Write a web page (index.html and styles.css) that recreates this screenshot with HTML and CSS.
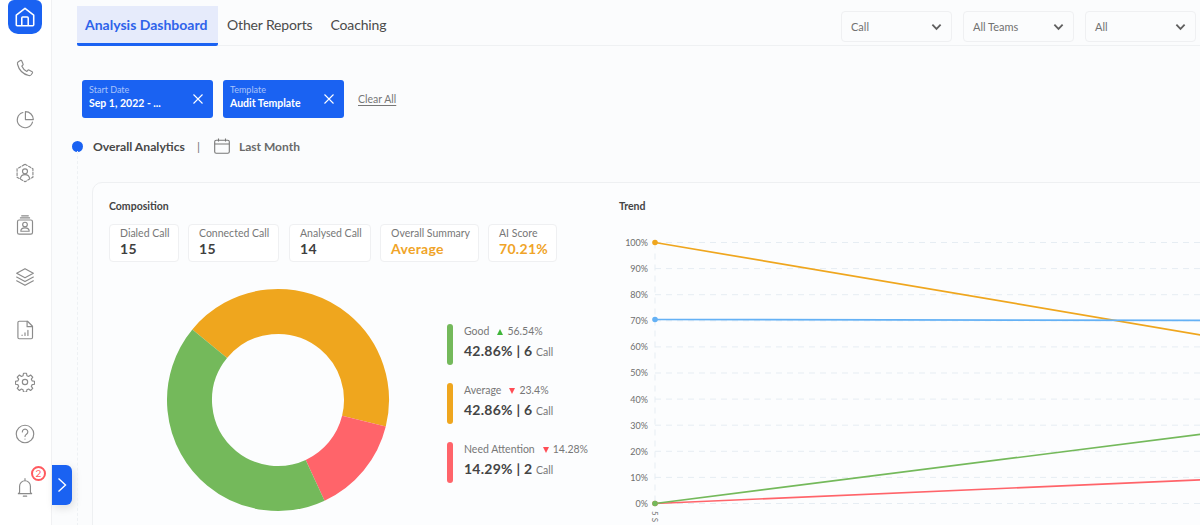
FILE: index.html
```html
<!DOCTYPE html>
<html lang="en">
<head>
<meta charset="utf-8">
<title>Analysis Dashboard</title>
<link rel="stylesheet" href="styles.css">
</head>
<body>
<div class="app">
  <aside class="sidebar">
    <div class="nav-home">
      <svg class="ic-home" viewBox="0 0 24 24"><path d="M2.500 10 12 2.500 21.500 10v10.500a1 1 0 0 1-1 1h-17a1 1 0 0 1-1-1z"/><path d="M8.500 21.500V13a1 1 0 0 1 1-1h5a1 1 0 0 1 1 1v8.500"/></svg>
    </div>
    <div class="nav-item"><svg viewBox="0 0 24 24"><path d="M6.500 3 4 4.500C3 5.200 2.700 6.300 3 7.500 4.700 14 10 19.500 16.500 21c1.200.3 2.200 0 2.900-.9l1.500-2.100a1 1 0 0 0-.3-1.400l-3.900-2.100a1 1 0 0 0-1.200.2l-1.300 1.400c-2.800-1.300-5-3.800-6.100-6.400l1.400-1.300a1 1 0 0 0 .2-1.200L8 3.300a1 1 0 0 0-1.500-.3z"/></svg></div>
    <div class="nav-item"><svg viewBox="0 0 24 24"><path d="M21 14.500A9.300 9.300 0 1 1 9.500 3"/><path d="M12.500 2v9.500H22A9.500 9.500 0 0 0 12.500 2z"/></svg></div>
    <div class="nav-item"><svg viewBox="0 0 24 24"><path d="m12 1.500 9.500 5.500v10L12 22.500 2.500 17V7z" stroke-dasharray="3 2"/><circle cx="12" cy="10" r="3"/><path d="M6.500 18.500c.5-3 2.500-4.500 5.500-4.500s5 1.500 5.500 4.500"/></svg></div>
    <div class="nav-item"><svg viewBox="0 0 24 24"><rect x="3" y="6" width="18" height="17" rx="2"/><path d="M6.500 3.500h11M8 1h8"/><circle cx="12" cy="11.500" r="2.800"/><path d="M7 19.500c0-2.800 2.200-4 5-4s5 1.200 5 4z"/></svg></div>
    <div class="nav-item"><svg viewBox="0 0 24 24"><path d="m12 2 10 5.500-10 5.500L2 7.500z"/><path d="m2 12 10 5.500L22 12M2 16.500 12 22l10-5.500"/></svg></div>
    <div class="nav-item"><svg viewBox="0 0 24 24"><path d="M5 1.500h10l6 6V21a1.500 1.500 0 0 1-1.500 1.500h-14.500A1.500 1.500 0 0 1 3.500 21V3A1.500 1.500 0 0 1 5 1.500z"/><path d="M14.500 1.500v6.500H21"/><path d="M8.500 18.500V18M12 18.500v-3M15.500 18.500v-6"/></svg></div>
    <div class="nav-item"><svg viewBox="0 0 24 24"><circle cx="12" cy="12" r="3.200"/><path d="M10.200 1.500h3.600l.5 2.900 2 .9 2.400-1.700 2.600 2.600-1.700 2.400.9 2 2.900.5v3.600l-2.900.5-.9 2 1.700 2.400-2.600 2.600-2.400-1.700-2 .9-.5 2.600h-3.600l-.5-2.600-2-.9-2.400 1.700-2.600-2.600 1.700-2.400-.9-2-2.900-.5v-3.600l2.900-.5.900-2-1.700-2.400 2.600-2.600 2.400 1.700 2-.9z"/></svg></div>
    <div class="nav-item"><svg viewBox="0 0 24 24"><circle cx="12" cy="12" r="10.500"/><path d="M8.800 9.500a3.300 3.300 0 1 1 5 2.800c-1.100.7-1.800 1.300-1.800 2.700M12 18v.1"/></svg></div>
    <div class="nav-item nav-bell">
      <svg viewBox="0 0 24 24"><path d="M5.500 18.500V11a6.500 6.500 0 0 1 13 0v7.500l1.500 1.500H4zM12 2v2.500M10 23h4"/></svg>
      <span class="badge">2</span>
    </div>
  </aside>
  <button class="expand" type="button"><svg viewBox="0 0 10 16"><path d="m1.500 1.500 7 6.500-7 6.500"/></svg></button>

  <main class="main">
    <header class="topbar">
      <nav class="tabs">
        <a class="tab tab-active">Analysis Dashboard</a>
        <a class="tab">Other Reports</a>
        <a class="tab">Coaching</a>
      </nav>
      <div class="selects">
        <div class="select"><span>Call</span><svg viewBox="0 0 12 8"><path d="m1.500 1.500 4.500 4.500 4.500-4.500"/></svg></div>
        <div class="select"><span>All Teams</span><svg viewBox="0 0 12 8"><path d="m1.500 1.500 4.500 4.500 4.500-4.500"/></svg></div>
        <div class="select"><span>All</span><svg viewBox="0 0 12 8"><path d="m1.500 1.500 4.500 4.500 4.500-4.500"/></svg></div>
      </div>
    </header>

    <section class="filters">
      <div class="chip chip-date">
        <div><div class="chip-label">Start Date</div><div class="chip-value">Sep 1, 2022 - ...</div></div>
        <svg viewBox="0 0 10 10"><path d="m.5.500 9 9M9.500.500l-9 9"/></svg>
      </div>
      <div class="chip chip-template">
        <div><div class="chip-label">Template</div><div class="chip-value">Audit Template</div></div>
        <svg viewBox="0 0 10 10"><path d="m.5.500 9 9M9.500.500l-9 9"/></svg>
      </div>
      <a class="clear">Clear All</a>
    </section>

    <section class="overall">
      <span class="dot"></span>
      <strong class="overall-title">Overall Analytics</strong>
      <span class="sep">|</span>
      <svg class="cal" viewBox="0 0 16 16"><rect x=".7" y="2.200" width="14.600" height="13" rx="1.500"/><path d="M.7 6h14.600M4.500.5v3M11.500.5v3"/></svg>
      <span class="period">Last Month</span>
    </section>

    <section class="card">
      <div class="col-left">
        <h2 class="card-title">Composition</h2>
        <div class="stats">
          <div class="stat stat-1"><div class="stat-label">Dialed Call</div><div class="stat-value">15</div></div>
          <div class="stat stat-2"><div class="stat-label">Connected Call</div><div class="stat-value">15</div></div>
          <div class="stat stat-3"><div class="stat-label">Analysed Call</div><div class="stat-value">14</div></div>
          <div class="stat stat-4"><div class="stat-label">Overall Summary</div><div class="stat-value orange">Average</div></div>
          <div class="stat stat-5"><div class="stat-label">AI Score</div><div class="stat-value orange">70.21%</div></div>
        </div>
        <div class="composition">
          <svg class="donut" viewBox="0 0 224 224">
            <g fill="none" stroke-width="45" transform="rotate(-140.500 112 112)">
              <circle cx="112" cy="112" r="88.500" pathLength="100" stroke="#efa61e" stroke-dasharray="42.860 57.140"/>
              <circle cx="112" cy="112" r="88.500" pathLength="100" stroke="#ff646a" stroke-dasharray="14.290 85.710" stroke-dashoffset="-42.860"/>
              <circle cx="112" cy="112" r="88.500" pathLength="100" stroke="#74b95b" stroke-dasharray="42.850 57.150" stroke-dashoffset="-57.150"/>
            </g>
          </svg>
          <ul class="legend">
            <li class="legend-item">
              <span class="bar bar-green"></span>
              <div>
                <div class="legend-top"><span>Good</span><i class="tri tri-up"></i><span>56.54%</span></div>
                <div class="legend-main">42.86% | 6 <small>Call</small></div>
              </div>
            </li>
            <li class="legend-item">
              <span class="bar bar-orange"></span>
              <div>
                <div class="legend-top"><span>Average</span><i class="tri tri-down"></i><span>23.4%</span></div>
                <div class="legend-main">42.86% | 6 <small>Call</small></div>
              </div>
            </li>
            <li class="legend-item">
              <span class="bar bar-red"></span>
              <div>
                <div class="legend-top"><span>Need Attention</span><i class="tri tri-down"></i><span>14.28%</span></div>
                <div class="legend-main">14.29% | 2 <small>Call</small></div>
              </div>
            </li>
          </ul>
        </div>
      </div>
      <div class="col-right">
        <h2 class="card-title">Trend</h2>
        <svg class="chart" viewBox="0 0 600 290" width="600" height="290">
          <g class="grid">
            <path d="M36 12.500H600M36 38.600H600M36 64.700H600M36 90.800H600M36 116.900H600M36 143H600M36 169.100H600M36 195.200H600M36 221.300H600M36 247.400H600M36 273.500H600"/>
            <path d="M36 12.500V273.500"/>
          </g>
          <g class="ticks">
            <text x="29" y="16">100%</text><text x="29" y="42">90%</text><text x="29" y="68">80%</text>
            <text x="29" y="94">70%</text><text x="29" y="120">60%</text><text x="29" y="146">50%</text>
            <text x="29" y="173">40%</text><text x="29" y="199">30%</text><text x="29" y="225">20%</text>
            <text x="29" y="251">10%</text><text x="29" y="277">0%</text>
          </g>
          <text class="xlabel" transform="translate(33 281) rotate(90)">5 S</text>
          <path class="line" stroke="#efa61e" d="M36 12.500 600 108"/>
          <path class="line" stroke="#64b1f5" d="M36 89.500 600 90.500"/>
          <path class="line" stroke="#ff646a" d="M36 273.500 600 249"/>
          <path class="line" stroke="#74b95b" d="M36 273.500 600 202"/>
          <circle cx="36" cy="12.500" r="2.800" fill="#efa61e"/>
          <circle cx="36" cy="89.500" r="2.800" fill="#64b1f5"/>
          <circle cx="36" cy="273.500" r="2.800" fill="#ff646a"/>
          <circle cx="36" cy="273.500" r="2.800" fill="#74b95b"/>
        </svg>
      </div>
    </section>
  </main>
</div>
</body>
</html>
```
FILE: styles.css
```css
* { box-sizing: border-box; }
html, body { margin: 0; height: 100%; overflow: hidden; }
body { font-family: Lato, "Open Sans", sans-serif; color: #3d3d3d; background: #fbfcfd; }
.app { display: flex; width: 1200px; height: 525px; position: relative; overflow: hidden; }

.sidebar { width: 52px; flex: none; background: #fff; border-right: 1px solid #f0f1f3; display: flex; flex-direction: column; align-items: center; }
.nav-home { width: 34px; height: 34px; margin-left: -1px; background: #1a62f2; border-radius: 6px 6px 10px 10px; display: flex; align-items: center; justify-content: center; }
.ic-home { width: 22px; height: 22px; fill: none; stroke: #fff; stroke-width: 1.700; stroke-linejoin: round; }
.nav-item { width: 34px; height: 52.300px; margin-left: -1px; display: flex; align-items: center; justify-content: center; position: relative; padding-top: 16px; }
.nav-item svg { width: 20px; height: 20px; fill: none; stroke: #8b8b8b; stroke-width: 1.400; stroke-linecap: round; stroke-linejoin: round; }
.badge { position: absolute; left: 23px; top: 14px; width: 15px; height: 15px; border-radius: 50%; background: #fff; border: 2px solid #ff5a5f; color: #ff5a5f; font-size: 10px; line-height: 11px; text-align: center; }
.expand { position: absolute; left: 52px; top: 465px; width: 20px; height: 40px; padding: 0; border: 0; background: #1a62f2; border-radius: 0 6px 6px 0; box-shadow: 2px 3px 8px rgba(0,0,0,.12); display: flex; align-items: center; justify-content: center; }
.expand svg { width: 10px; height: 16px; fill: none; stroke: #fff; stroke-width: 1.400; }

.main { flex: 1; min-width: 0; }
.topbar { height: 46px; margin-left: 25px; border-bottom: 1px solid #eff1f3; display: flex; justify-content: space-between; align-items: flex-start; }
.tabs { display: flex; padding-top: 6px; }
.tab { height: 40px; padding: 0 9px; font-size: 14px; line-height: 38px; color: #4b4b4b; letter-spacing: -.15px; }
.tab-active { width: 141px; padding: 0 8px; color: #2f63ea; font-weight: 700; background: #e6ebfb; border-bottom: 3px solid #1a62f2; border-radius: 0 0 2px 2px; white-space: nowrap; letter-spacing: 0; }
.selects { display: flex; gap: 11px; padding: 11px 4px 0 0; }
.select { width: 111px; height: 31px; border: 1px solid #eff0f2; border-radius: 4px; display: flex; align-items: center; justify-content: space-between; padding: 0 9px; font-size: 11px; color: #717171; }
.select svg { width: 11px; height: 8px; fill: none; stroke: #5f5f5f; stroke-width: 2; }

.filters { display: flex; align-items: center; padding: 34px 0 0 30px; }
.chip { height: 38px; background: #1a62f2; border-radius: 3px; color: #fff; display: flex; align-items: center; justify-content: space-between; padding: 0 10px 3px 7px; }
.chip-date { width: 131px; margin-right: 10px; }
.chip-template { width: 121px; margin-right: 14px; }
.chip svg { width: 10px; height: 10px; margin-top: 3px; fill: none; stroke: #fff; stroke-width: 1.100; }
.chip-label { font-size: 9px; line-height: 11px; color: #a8c2fa; }
.chip-value { font-size: 10.500px; line-height: 15px; font-weight: 700; margin-top: 1px; }
.clear { font-size: 10.500px; color: #777; text-decoration: underline; text-underline-offset: 2px; }

.overall { display: flex; align-items: center; height: 20px; margin: 18px 0 0 20px; font-size: 12.200px; position: relative; }
.overall::after { content: ""; position: absolute; left: 5px; top: 15px; height: 380px; border-left: 1px dashed #eef1f4; }
.dot { width: 11px; height: 11px; border-radius: 50%; background: #1a62f2; margin-right: 10px; }
.overall-title { font-weight: 700; color: #484848; }
.sep { margin: 0 14px 0 12px; color: #777; }
.cal { width: 16px; height: 16px; fill: none; stroke: #777; stroke-width: 1.100; margin-right: 9px; }
.period { font-weight: 700; color: #6a6a6a; font-size: 12px; }

.card { display: flex; width: 1130px; height: 400px; margin: 26px 0 0 40px; padding: 17px 0 0 16px; background: #fcfdfe; border: 1px solid #eef0f2; border-radius: 10px; }
.card-title { margin: 0; font-size: 10.500px; line-height: 13px; font-weight: 700; color: #444; }
.col-left { width: 510px; flex: none; }
.col-right { flex: 1; }
.stats { display: flex; margin-top: 11px; }
.stat { height: 38px; border: 1px solid #eff0f2; border-radius: 4px; padding: 2px 0 0 10px; background: #fff; }
.stat-1 { width: 70px; margin-right: 9px; }
.stat-2 { width: 91px; margin-right: 10px; }
.stat-3 { width: 82px; margin-right: 9px; }
.stat-4 { width: 99px; margin-right: 9px; }
.stat-5 { width: 69px; }
.stat-label { font-size: 10.500px; line-height: 13px; color: #777; }
.stat-value { font-size: 14px; line-height: 17px; font-weight: 700; color: #3f3f3f; letter-spacing: .3px; }
.orange { color: #f0a428; }

.composition { display: flex; align-items: flex-start; margin-top: 26px; }
.donut { width: 224px; height: 224px; margin-left: 57px; flex: none; }
.legend { list-style: none; margin: 36px 0 0 57px; padding: 0; }
.legend-item { display: flex; gap: 11px; height: 59px; white-space: nowrap; }
.bar { width: 6px; height: 41px; border-radius: 3px; flex: none; }
.bar-green { background: #74b95b; }
.bar-orange { background: #efa61e; }
.bar-red { background: #ff646a; }
.legend-top { display: flex; align-items: center; font-size: 10.500px; line-height: 13px; color: #777; margin-top: 1px; }
.tri { width: 0; height: 0; margin: 0 4px 0 8px; border-left: 3.500px solid transparent; border-right: 3.500px solid transparent; }
.tri-up { border-bottom: 6px solid #3fb53a; }
.tri-down { border-top: 6px solid #ff4d55; }
.legend-main { font-size: 14px; line-height: 18px; margin-top: 4px; font-weight: 700; color: #444; letter-spacing: .25px; }
.legend-main small { font-size: 10.500px; font-weight: 400; color: #777; letter-spacing: 0; }

.chart { display: block; margin-top: 17px; overflow: visible; }
.grid path { fill: none; stroke: #e6edf3; stroke-width: 1; stroke-dasharray: 6 5; }
.ticks text { font-size: 9px; fill: #6e6e6e; text-anchor: end; }
.xlabel { font-size: 8px; fill: #6e6e6e; }
.line { fill: none; stroke-width: 1.700; }
```
